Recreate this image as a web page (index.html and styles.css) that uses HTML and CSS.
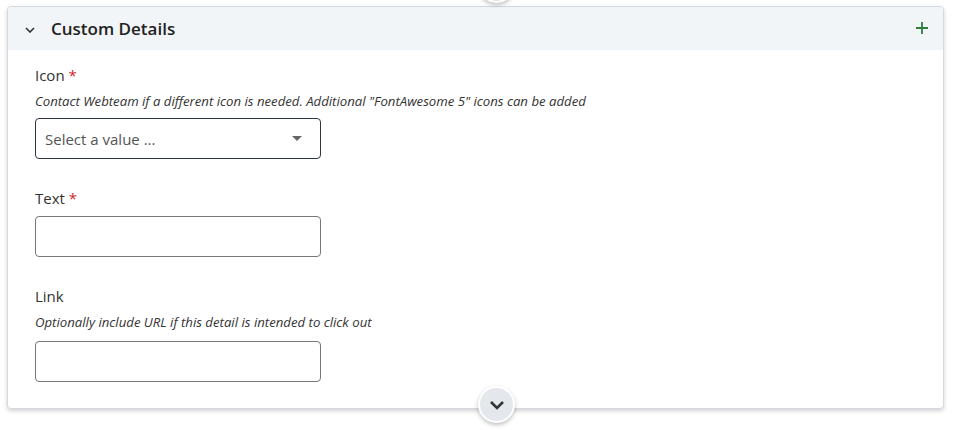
FILE: index.html
```html
<!DOCTYPE html>
<html lang="en">
<head>
    <meta charset="UTF-8">
    <meta name="viewport" content="width=device-width, initial-scale=1.0">
    <title>Custom Details</title>
    <link rel="stylesheet" href="styles.css">
</head>
<body>
    <div class="card">
        <span class="toggle toggle-top"></span>
        <div class="card-header">
            <svg class="chevron" width="10" height="6" viewBox="0 0 10 6">
                <path d="M1 1l4 4 4-4" fill="none" stroke="#333" stroke-width="1.6"/>
            </svg>
            <h2>Custom Details</h2>
            <svg class="plus" width="12" height="12" viewBox="0 0 12 12">
                <path d="M6 0v12M0 6h12" stroke="#2e7d3c" stroke-width="1.8"/>
            </svg>
        </div>
        <div class="card-body">
            <div class="field">
                <label>Icon <span class="req">*</span></label>
                <p class="hint">Contact Webteam if a different icon is needed. Additional "FontAwesome 5" icons can be added</p>
                <div class="select">
                    <span>Select a value ...</span>
                    <span class="caret"></span>
                </div>
            </div>
            <div class="field">
                <label>Text <span class="req">*</span></label>
                <input type="text" class="input">
            </div>
            <div class="field field-link">
                <label>Link</label>
                <p class="hint">Optionally include URL if this detail is intended to click out</p>
                <input type="text" class="input">
            </div>
        </div>
        <span class="toggle toggle-bottom">
            <svg width="16" height="10" viewBox="0 0 16 10">
                <path d="M2 2l6 6 6-6" fill="none" stroke="#333" stroke-width="2.6"/>
            </svg>
        </span>
    </div>
</body>
</html>
```
FILE: styles.css
```css
body {
    margin: 0;
    padding: 6px 15px 30px 7px;
    font-family: "Open Sans", Arial, sans-serif;
    color: #333;
    background-color: #fff;
}

.card {
    position: relative;
    border: 1px solid #d3d9df;
    border-radius: 4px;
    background-color: #fff;
    box-shadow: 0 2px 4px rgba(0, 0, 0, 0.18);
}

.card-header {
    display: flex;
    align-items: center;
    height: 43px;
    padding: 0 15px 0 17px;
    background-color: #f2f5f8;
    border-radius: 4px 4px 0 0;
}

.chevron {
    margin-top: 2px;
    margin-right: 16px;
}

.card-header h2 {
    flex: 1;
    margin: 0;
    font-size: 17px;
    font-weight: 600;
    color: #222;
}

.plus {
    margin-top: -2px;
}

.card-body {
    padding: 14px 27px 26px;
}

.field {
    margin-bottom: 28px;
}

.field:last-child {
    margin-bottom: 0;
}

label {
    display: block;
    font-size: 15px;
    line-height: 22px;
    margin-bottom: 7px;
}

.req {
    color: #d0262b;
}

.hint {
    margin: -1px 0 8px;
    font-size: 13.2px;
    line-height: 18px;
    font-style: italic;
    color: #333;
}

.field-link .hint {
    margin-bottom: 10px;
}

.select {
    display: flex;
    align-items: center;
    justify-content: space-between;
    box-sizing: border-box;
    width: 286px;
    height: 41px;
    padding: 0 18px 0 9px;
    border: 1px solid #2f3640;
    border-radius: 4px;
    font-size: 15px;
    color: #555;
}

.caret {
    width: 0;
    height: 0;
    border-left: 5px solid transparent;
    border-right: 5px solid transparent;
    border-top: 5px solid #666;
}

.input {
    display: block;
    box-sizing: border-box;
    width: 286px;
    height: 41px;
    margin: 0;
    border: 1px solid #777;
    border-radius: 4px;
    font-family: inherit;
}

.toggle {
    position: absolute;
    left: 470px;
    box-sizing: border-box;
    width: 37px;
    height: 37px;
    border: 2px solid #fff;
    border-radius: 50%;
    background-color: #e4e7eb;
    box-shadow: 0 2px 4px rgba(0, 0, 0, 0.25);
    display: flex;
    align-items: center;
    justify-content: center;
}

.toggle-top {
    top: -41px;
}

.toggle-bottom {
    bottom: -15px;
}
```
